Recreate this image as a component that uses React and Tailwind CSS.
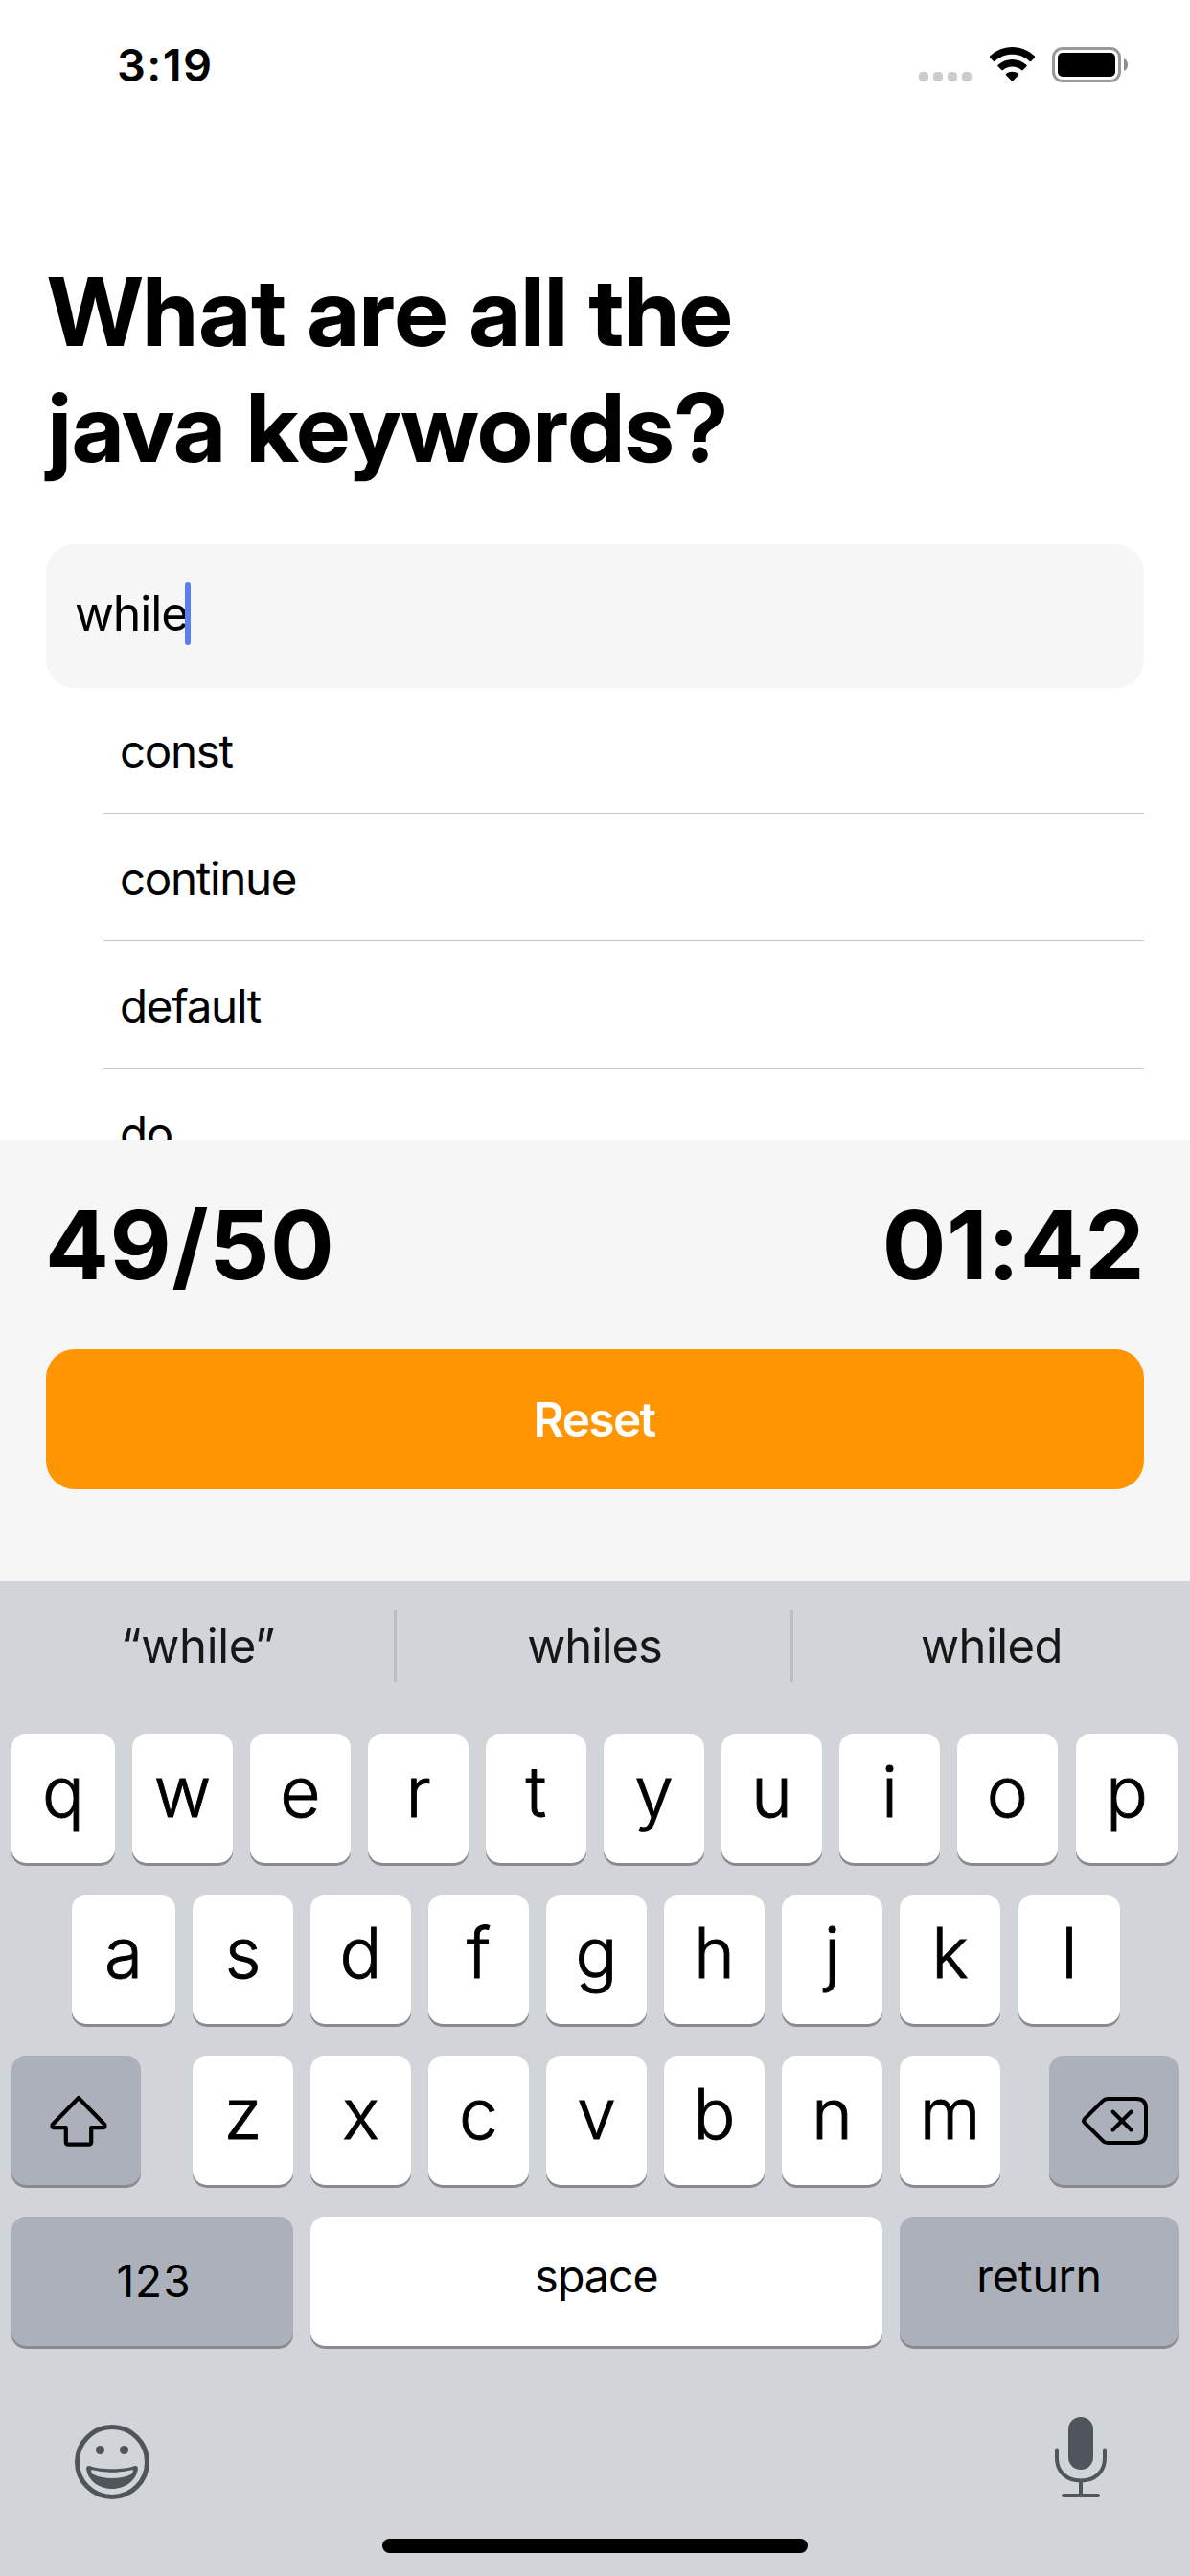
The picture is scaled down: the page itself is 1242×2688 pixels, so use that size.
import React from "react";

const words = ["const", "continue", "default", "do"];

function StatusBar() {
  return (
    <header className="flex h-[132px] items-start justify-between pl-[122px] pr-[65px]">
      <span className="mt-[37px] text-[47px] font-semibold leading-[62px] tracking-[1.4px]">3:19</span>
      <div className="mt-[49px] flex h-[37px]">
        <div className="mt-[26px] flex gap-[5px]">
          <i className="h-[10px] w-[10px] rounded-[4px] bg-[#cccccc]" />
          <i className="h-[10px] w-[10px] rounded-[4px] bg-[#cccccc]" />
          <i className="h-[10px] w-[10px] rounded-[4px] bg-[#cccccc]" />
          <i className="h-[10px] w-[10px] rounded-[4px] bg-[#cccccc]" />
        </div>
        <svg className="ml-[18px] h-[37px] w-[49px]" viewBox="0 0 49 37" fill="black">
          <path d="M24.5 0C33.5 0 41.8 3.6 47.9 9.5Q48.7 10.3 47.9 11.1L44.1 14.9Q43.4 15.6 42.6 14.9C37.8 10.4 31.5 7.8 24.5 7.8S11.2 10.4 6.4 14.9Q5.6 15.6 4.9 14.9L1.1 11.1Q.3 10.3 1.1 9.5C7.2 3.6 15.5 0 24.5 0Z" />
          <path d="M24.5 12.9C30.3 12.9 35.5 15.1 39.4 18.7Q40.2 19.5 39.4 20.3L35.6 24.1Q34.9 24.8 34.1 24.1C31.5 21.9 28.2 20.6 24.5 20.6S17.5 21.9 14.9 24.1Q14.1 24.8 13.4 24.1L9.6 20.3Q8.8 19.5 9.6 18.7C13.5 15.1 18.7 12.9 24.5 12.9Z" />
          <path d="M24.5 25.7C26.9 25.7 29.1 26.5 30.9 27.9Q31.7 28.6 30.9 29.4L25.3 35.2Q24.5 36 23.7 35.2L18.1 29.4Q17.3 28.6 18.1 27.9C19.9 26.5 22.1 25.7 24.5 25.7Z" />
        </svg>
        <div className="ml-[17px] h-[37px] w-[72px] rounded-[11px] border-[3px] border-[#999999] p-[3px]">
          <div className="h-full w-full rounded-[5px] bg-black" />
        </div>
        <svg className="ml-[3px] mt-[12px] h-[13px] w-[4px]" viewBox="0 0 4 13" fill="#8c8c8c">
          <path d="M0 0C2.5 1 4 3.5 4 6.5S2.5 12 0 13Z" />
        </svg>
      </div>
    </header>
  );
}

const keyBase = "flex h-[135px] items-center justify-center rounded-[15px] shadow-[0_3px_0_#898a8d]";

function Letter({ children, className = "w-[105px]" }) {
  return (
    <div
      className={`${keyBase} bg-white pb-[14px] text-[73px] leading-none font-light [-webkit-text-stroke:0.9px_black] ${className}`}
    >
      {children}
    </div>
  );
}

function Keyboard() {
  return (
    <section className="flex h-[1038px] flex-col bg-[#d1d4d9]">
      <div className="flex h-[135px] items-center text-center text-[49px] tracking-[-0.6px] text-[#161818]">
        <span className="w-[411px] pl-[2px] tracking-[-0.3px]">“while”</span>
        <i className="h-[75px] w-[3px] bg-[#bbbdc2]" />
        <span className="w-[411px] pl-[2px] tracking-[-1.1px]">whiles</span>
        <i className="h-[75px] w-[3px] bg-[#bbbdc2]" />
        <span className="w-[414px]">whiled</span>
      </div>

      <div className="mt-6 flex flex-col gap-[33px]">
        <div className="flex gap-[18px] pl-3">
          <Letter className="w-[108px]">q</Letter>
          <Letter>w</Letter>
          <Letter>e</Letter>
          <Letter>r</Letter>
          <Letter>t</Letter>
          <Letter>y</Letter>
          <Letter>u</Letter>
          <Letter>i</Letter>
          <Letter>o</Letter>
          <Letter className="ml-px w-[106px]">p</Letter>
        </div>
        <div className="flex gap-[18px] pl-[75px]">
          <Letter className="w-[108px]">a</Letter>
          <Letter>s</Letter>
          <Letter>d</Letter>
          <Letter>f</Letter>
          <Letter>g</Letter>
          <Letter>h</Letter>
          <Letter>j</Letter>
          <Letter>k</Letter>
          <Letter className="ml-px w-[106px]">l</Letter>
        </div>
        <div className="flex justify-between px-3">
          <div className={`${keyBase} w-[135px] bg-[#abb0ba]`}>
            <svg className="ml-[4px] h-[54px] w-[60px]" viewBox="0 0 60 54" fill="none" stroke="black" strokeWidth="4.2" strokeLinejoin="round">
              <path d="M30 3L57.3 31Q58 34.2 55.5 34.2H43.2V49Q43.2 51.6 40.6 51.6H19.4Q16.8 51.6 16.8 49V34.2H4.5Q2 34.2 2.7 31Z" />
            </svg>
          </div>
          <div className="ml-[3px] flex gap-[18px]">
            <Letter>z</Letter>
            <Letter>x</Letter>
            <Letter>c</Letter>
            <Letter>v</Letter>
            <Letter>b</Letter>
            <Letter>n</Letter>
            <Letter>m</Letter>
          </div>
          <div className={`${keyBase} w-[135px] bg-[#abb0ba]`}>
            <svg className="ml-[2px] h-[50px] w-[69px]" viewBox="0 0 69 50" fill="none" stroke="black" strokeWidth="4" strokeLinejoin="round" strokeLinecap="round">
              <path d="M27 2H57Q67 2 67 12V38Q67 48 57 48H27Q24 48 22 45.8L3 27Q1.2 25 3 23L22 4.2Q24 2 27 2Z" />
              <path d="M32.5 15.5L51.5 34.5M51.5 15.5L32.5 34.5" />
            </svg>
          </div>
        </div>
        <div className="flex gap-[18px] px-3">
          <div className={`${keyBase} w-[294px] bg-[#abb0ba] pl-[3px] text-[46px] tracking-[1px]`}>123</div>
          <div className={`${keyBase} w-[597px] bg-white pb-[9px] text-[46.5px] tracking-[-1px]`}>space</div>
          <div className={`${keyBase} w-[291px] bg-[#abb0ba] pb-[9px] text-[46.5px] tracking-[-0.3px]`}>return</div>
        </div>
      </div>

      <div className="mt-[73px] flex items-start justify-between pl-[78px] pr-[87px]">
        <svg className="mt-[9px] h-[78px] w-[78px]" viewBox="0 0 78 78" fill="none">
          <circle cx="39" cy="39" r="36.5" stroke="#50555c" strokeWidth="5" />
          <circle cx="26.5" cy="26.5" r="4.6" fill="#50555c" />
          <circle cx="51.5" cy="26.5" r="4.6" fill="#50555c" />
          <path fill="#50555c" fillRule="evenodd" d="M15.5 43C25 47.3 53 47.3 62.5 43Q66.5 42.6 65.8 47C64 58 53 67 39 67S14 58 12.2 47Q11.5 42.6 15.5 43ZM17.3 47Q16.8 51 20 52.2C30 57.3 48 57.3 58 52.2Q61.2 51 60.7 47Q50 50 39 50T17.3 47Z" />
        </svg>
        <svg className="h-[86px] w-[54px]" viewBox="0 0 54 86" fill="none" stroke="#50555c" strokeWidth="4" strokeLinecap="round">
          <rect x="14" y="1" width="26" height="55" rx="13" fill="#50555c" stroke="none" />
          <path d="M2 35.5V44C2 58 12 67.5 27 67.5S52 58 52 44V35.5M27 68V83M9 83H45" />
        </svg>
      </div>
      <div className="mx-auto mt-auto mb-6 h-[15px] w-[444px] rounded-full bg-black" />
    </section>
  );
}

export default function App() {
  return (
    <main className="flex h-[2688px] w-[1242px] flex-col overflow-hidden bg-white font-['Inter','Liberation_Sans',sans-serif] text-black">
      <StatusBar />
      <h1 className="mt-[133px] ml-[50px] h-[303px] text-[99px] font-bold leading-[121px] tracking-[0.2px] font-['Inter_Display','Inter',sans-serif]">
        What are all the
        <br />
        java keywords?
      </h1>
      <div className="mx-12 flex h-[150px] shrink-0 items-center rounded-[30px] bg-[#f6f6f6] pb-[6px] pl-[30px]">
        <span className="text-[50px] tracking-[-1.1px]">while</span>
        <i className="-ml-[3px] h-[66px] w-[6px] rounded-[3px] bg-[#587ff5]" />
      </div>
      <ul className="mr-12 ml-[108px] h-[472px] shrink-0 overflow-hidden">
        {words.map((word) => (
          <li
            key={word}
            className="flex h-[133px] items-end border-b border-[#c6c6c8] pl-[17px] text-[47.5px] leading-[128px] tracking-[-1.3px] first:h-[131px]"
          >
            {word}
          </li>
        ))}
      </ul>
      <section className="h-[460px] shrink-0 bg-[#f6f6f6] px-12 pt-[49px]">
        <div className="-mx-px flex justify-between text-[99px] font-bold leading-[120px] tracking-[0.5px]">
          <span>49/50</span>
          <span>01:42</span>
        </div>
        <div className="mt-[49px] flex h-[146px] items-center justify-center rounded-[30px] bg-[#ff9500] pr-[2px] text-[49.5px] font-semibold tracking-[-1.6px] text-white">
          Reset
        </div>
      </section>
      <Keyboard />
    </main>
  );
}
